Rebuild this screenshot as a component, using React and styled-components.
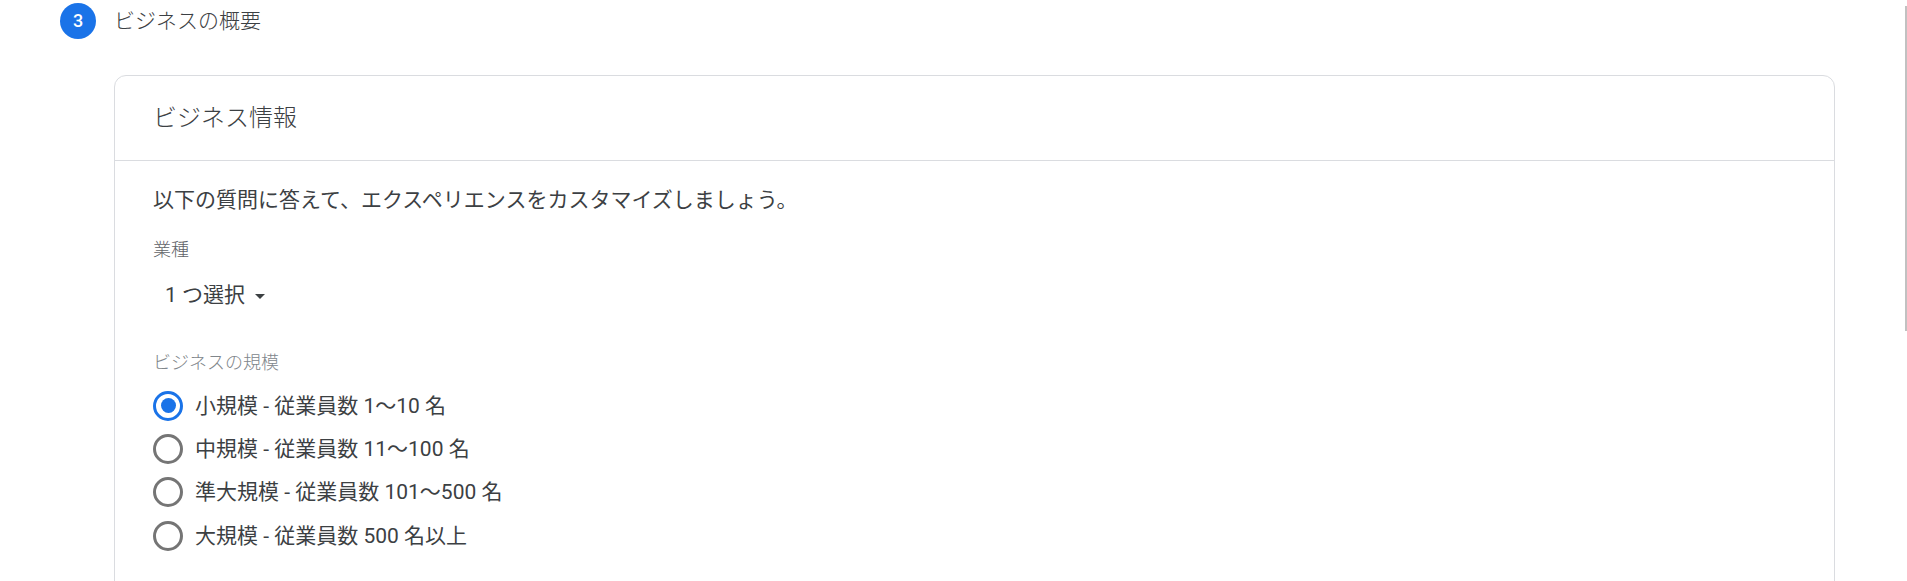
import React from "react";
import styled, { createGlobalStyle } from "styled-components";

const GlobalStyle = createGlobalStyle`
  html, body {
    margin: 0;
    padding: 0;
    overflow: hidden;
    background: #ffffff;
  }
  body {
    font-family: Roboto, "Noto Sans CJK JP", "Noto Sans", sans-serif;
    -webkit-font-smoothing: antialiased;
    text-spacing-trim: space-all;
  }
`;

const Page = styled.div`
  position: relative;
  width: 1907px;
  height: 581px;
  overflow: hidden;
`;

const StepHeader = styled.div`
  display: flex;
  align-items: center;
  gap: 18px;
  height: 41px;
  padding-left: 60px;
`;

const StepBadge = styled.div`
  width: 36px;
  height: 36px;
  border-radius: 50%;
  background: #1a73e8;
  color: #ffffff;
  display: flex;
  align-items: center;
  justify-content: center;
  font-family: Roboto, sans-serif;
  font-weight: 500;
  font-size: 18px;
`;

const StepTitle = styled.div`
  font-size: 21px;
  line-height: 30px;
  color: #3c4043;
  font-weight: 300;
`;

const Card = styled.section`
  margin: 34px 72px 0 114px;
  border: 1px solid #dadce0;
  border-radius: 12px;
  min-height: 640px;
  background: #ffffff;
`;

const CardHeader = styled.header`
  height: 84px;
  display: flex;
  align-items: center;
  padding: 0 38px;
  border-bottom: 1px solid #dadce0;
`;

const CardTitle = styled.h2`
  margin: 0;
  font-size: 24px;
  line-height: 32px;
  font-weight: 300;
  color: #3c4043;
`;

const CardBody = styled.div`
  padding: 24px 38px;
`;

const Intro = styled.p`
  margin: 0;
  font-size: 21px;
  line-height: 30px;
  color: #3c4043;
  font-weight: 400;
`;

const FieldLabel = styled.div`
  margin-top: ${(p) => p.$gap}px;
  font-size: 18px;
  line-height: 24px;
  color: ${(p) => (p.$muted ? "#80868b" : "#5f6368")};
  font-weight: 300;
`;

const SelectButton = styled.button`
  margin-top: 18px;
  display: inline-flex;
  align-items: center;
  gap: 10px;
  padding: 0 0 0 12px;
  border: none;
  background: transparent;
  font-family: inherit;
  font-size: 21px;
  line-height: 30px;
  color: #3c4043;
  font-weight: 400;
  cursor: pointer;
`;

const Caret = styled.span`
  width: 0;
  height: 0;
  border-left: 5px solid transparent;
  border-right: 5px solid transparent;
  border-top: 5px solid #3c4043;
  margin-top: 2px;
`;

const RadioGroup = styled.div`
  margin-top: 9px;
  display: flex;
  flex-direction: column;
`;

const RadioRow = styled.label`
  display: flex;
  align-items: center;
  gap: 12px;
  height: 43.4px;
  cursor: pointer;
`;

const RadioCircle = styled.span`
  box-sizing: border-box;
  width: 30px;
  height: 30px;
  border-radius: 50%;
  border: 3px solid ${(p) => (p.$checked ? "#1a73e8" : "#757575")};
  display: flex;
  align-items: center;
  justify-content: center;
  &::after {
    content: "";
    width: 15px;
    height: 15px;
    border-radius: 50%;
    background: ${(p) => (p.$checked ? "#1a73e8" : "transparent")};
  }
`;

const RadioText = styled.span`
  font-size: 21px;
  line-height: 30px;
  color: #3c4043;
  font-weight: 400;
`;

const ScrollThumb = styled.div`
  position: absolute;
  right: 0;
  top: 6px;
  width: 2px;
  height: 325px;
  background: #c1c1c1;
`;

const options = [
  "小規模 - 従業員数 1～10 名",
  "中規模 - 従業員数 11～100 名",
  "準大規模 - 従業員数 101～500 名",
  "大規模 - 従業員数 500 名以上",
];

export default function App() {
  const [selected, setSelected] = React.useState(0);
  return (
    <>
      <GlobalStyle />
      <Page>
        <StepHeader>
          <StepBadge>3</StepBadge>
          <StepTitle>ビジネスの概要</StepTitle>
        </StepHeader>
        <Card>
          <CardHeader>
            <CardTitle>ビジネス情報</CardTitle>
          </CardHeader>
          <CardBody>
            <Intro>以下の質問に答えて、エクスペリエンスをカスタマイズしましょう。</Intro>
            <FieldLabel $gap={23}>業種</FieldLabel>
            <SelectButton type="button">
              1 つ選択
              <Caret />
            </SelectButton>
            <FieldLabel $gap={41} $muted>
              ビジネスの規模
            </FieldLabel>
            <RadioGroup role="radiogroup">
              {options.map((o, i) => (
                <RadioRow key={o} onClick={() => setSelected(i)}>
                  <RadioCircle $checked={selected === i} />
                  <RadioText>{o}</RadioText>
                </RadioRow>
              ))}
            </RadioGroup>
          </CardBody>
        </Card>
        <ScrollThumb />
      </Page>
    </>
  );
}
